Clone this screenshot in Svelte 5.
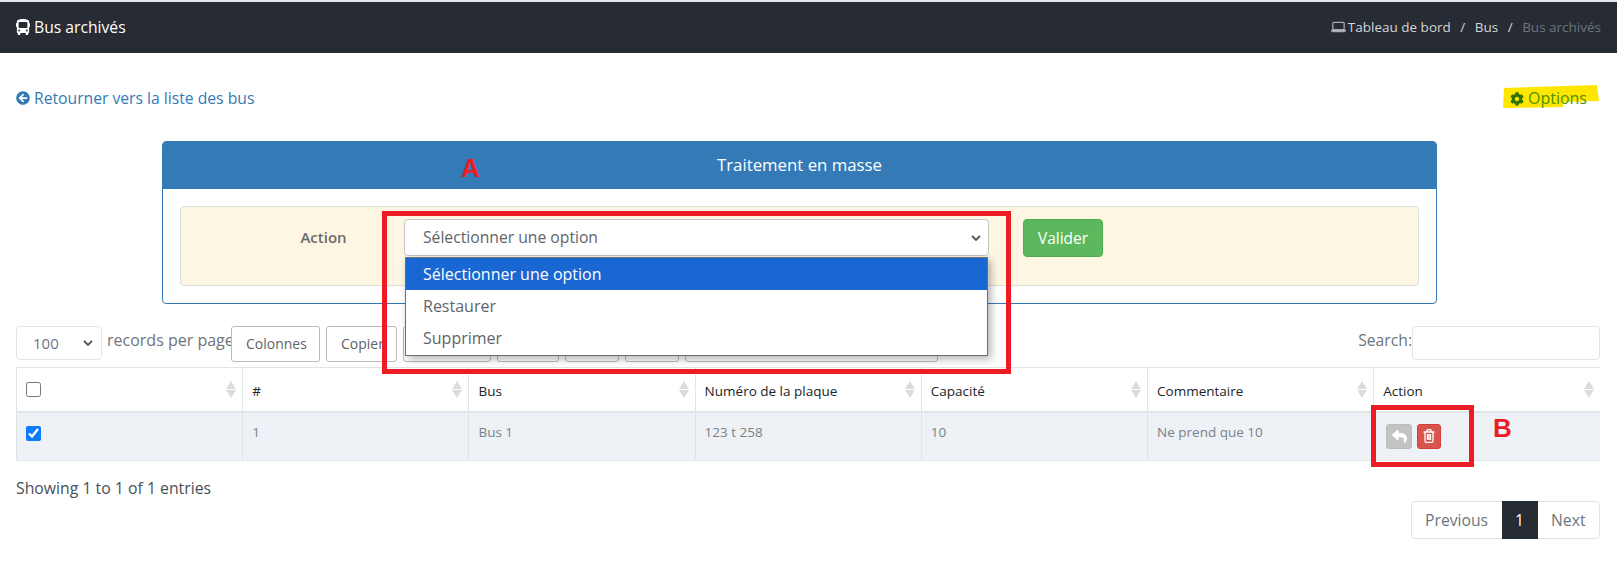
<script lang="ts">
  const columns = ["", "#", "Bus", "Numéro de la plaque", "Capacité", "Commentaire", "Action"];
  const row = ["1", "Bus 1", "123 t 258", "10", "Ne prend que 10"];
  const bulkOptions = ["Sélectionner une option", "Restaurer", "Supprimer"];
</script>

<div class="page">
  <header class="topbar">
    <div class="title">
      <svg class="ic bus" viewBox="0 0 512 512" preserveAspectRatio="none"><path fill="currentColor" d="M488 128h-8V80c0-44.8-99.2-80-224-80S32 35.2 32 80v48h-8c-13.25 0-24 10.74-24 24v80c0 13.25 10.75 24 24 24h8v160c0 17.67 14.33 32 32 32v32c0 17.67 14.33 32 32 32h32c17.67 0 32-14.33 32-32v-32h192v32c0 17.67 14.33 32 32 32h32c17.67 0 32-14.33 32-32v-32h6.4c16 0 25.6-12.8 25.6-25.6V256h8c13.25 0 24-10.75 24-24v-80c0-13.26-10.75-24-24-24zM112 400c-17.67 0-32-14.33-32-32s14.33-32 32-32 32 14.33 32 32-14.33 32-32 32zm16-112c-17.67 0-32-14.33-32-32V128c0-17.67 14.33-32 32-32h256c17.67 0 32 14.33 32 32v128c0 17.67-14.33 32-32 32H128zm272 112c-17.67 0-32-14.33-32-32s14.33-32 32-32 32 14.33 32 32-14.33 32-32 32z"/></svg>
      Bus archivés
    </div>
    <nav class="crumbs">
      <svg class="laptop" viewBox="0 0 16 12"><path fill="none" stroke="currentColor" d="M2.5 1h11a.5.5 0 0 1 .5.5V9H2V1.500a.5.5 0 0 1 .5-.5zM.5 9.500h15V10a1 1 0 0 1-1 1h-13a1 1 0 0 1-1-1z"/></svg>
      <span>Tableau de bord</span>
      <i>/</i>
      <span>Bus</span>
      <i>/</i>
      <span class="current">Bus archivés</span>
    </nav>
  </header>

  <main class="content">
    <div class="links">
      <a class="back" href="#back">
        <svg class="ic" viewBox="0 0 512 512"><path fill="currentColor" d="M256 504C119 504 8 393 8 256S119 8 256 8s248 111 248 248-111 248-248 248zm28.9-143.6L209.4 288H392c13.3 0 24-10.7 24-24v-16c0-13.3-10.7-24-24-24H209.4l75.5-72.4c9.7-9.3 9.900-24.800.4-34.300l-11-10.900c-9.400-9.400-24.600-9.400-33.900 0L107.700 239c-9.400 9.400-9.400 24.600 0 33.900l132.700 132.700c9.400 9.400 24.600 9.400 33.900 0l11-10.900c9.500-9.500 9.300-25-.4-34.300z"/></svg>
        Retourner vers la liste des bus
      </a>
      <a class="options" href="#options">
        <svg class="marker" viewBox="0 0 96 24" aria-hidden="true"><path fill="#ffe600" d="M1 3 L94 0 L96 16 L60 17 L60 22 L0 23 Z"/></svg>
        <svg class="ic" viewBox="0 0 512 512"><path fill="#2f7300" d="M487.400 315.700l-42.600-24.600c4.300-23.200 4.300-47 0-70.200l42.600-24.600c4.900-2.800 7.100-8.600 5.500-14-11.100-35.600-30-67.800-54.700-94.600-3.800-4.100-10-5.100-14.800-2.300L380.800 110c-17.900-15.400-38.500-27.300-60.800-35.100V25.800c0-5.600-3.900-10.500-9.400-11.700-36.700-8.200-74.300-7.800-109.200 0-5.500 1.200-9.400 6.100-9.400 11.700V75c-22.200 7.900-42.800 19.800-60.800 35.100L88.700 85.500c-4.900-2.800-11-1.900-14.800 2.300-24.700 26.700-43.600 58.900-54.700 94.600-1.700 5.400.6 11.200 5.500 14L67.300 221c-4.300 23.200-4.300 47 0 70.200l-42.600 24.600c-4.900 2.800-7.100 8.600-5.500 14 11.100 35.600 30 67.800 54.700 94.600 3.800 4.100 10 5.100 14.800 2.300l42.600-24.600c17.900 15.400 38.500 27.300 60.800 35.100v49.200c0 5.600 3.900 10.500 9.400 11.700 36.700 8.200 74.300 7.800 109.200 0 5.500-1.200 9.400-6.100 9.400-11.700v-49.200c22.200-7.900 42.800-19.800 60.800-35.100l42.600 24.600c4.900 2.800 11 1.900 14.800-2.300 24.700-26.700 43.600-58.900 54.700-94.600 1.500-5.500-.7-11.300-5.600-14.100zM256 336c-44.100 0-80-35.900-80-80s35.900-80 80-80 80 35.900 80 80-35.900 80-80 80z"/></svg>
        <span>Options</span>
      </a>
    </div>

    <section class="panel">
      <div class="panel-head">Traitement en masse</div>
      <div class="panel-body">
        <div class="well">
          <div class="action-label">Action</div>
          <div class="bulk">
            <select class="bulk-select">
              <option>{bulkOptions[0]}</option>
            </select>
            <ul class="dropdown">
              {#each bulkOptions as o, i}
                <li class:active={i === 0}>{o}</li>
              {/each}
            </ul>
          </div>
          <button class="valider">Valider</button>
        </div>
      </div>
    </section>

    <div class="toolbar">
      <select class="length"><option>100</option></select>
      <span class="per-page">records per page</span>
      <div class="buttons">
        <button class="tb">Colonnes</button>
        <button class="tb">Copier</button>
        <button class="tb w88" aria-hidden="true"></button>
        <button class="tb w62" aria-hidden="true"></button>
        <button class="tb w54" aria-hidden="true"></button>
        <button class="tb w54" aria-hidden="true"></button>
        <button class="tb w253" aria-hidden="true"></button>
      </div>
      <label class="search">Search:<input type="text" /></label>
    </div>

    <table>
      <thead>
        <tr>
          {#each columns as c, i}
            <th>
              <div class="th-inner">
                {#if i === 0}
                  <input class="check" type="checkbox" />
                {:else}
                  <span>{c}</span>
                {/if}
                <span class="sort"></span>
              </div>
            </th>
          {/each}
        </tr>
      </thead>
      <tbody>
        <tr>
          <td><input class="check checked" type="checkbox" checked /></td>
          {#each row as v}<td>{v}</td>{/each}
          <td>
            <div class="row-actions">
              <button class="act grey" aria-label="Restaurer">
                <svg viewBox="0 0 512 512"><path fill="currentColor" d="M8.309 189.836L184.313 37.851C199.719 24.546 224 35.347 224 56.015v80.053c160.629 1.839 288 34.032 288 186.258 0 61.441-39.581 122.309-83.333 154.132-13.653 9.931-33.111-2.533-28.077-18.631 45.344-145.012-21.507-183.510-176.590-185.742V360c0 20.700-24.300 31.453-39.687 18.164l-176.004-152c-11.071-9.562-11.086-26.753 0-36.328z"/></svg>
              </button>
              <button class="act red" aria-label="Supprimer">
                <svg viewBox="0 0 12 14"><path fill="none" stroke="currentColor" stroke-width="1.300" d="M.5 3h11M2 3v9a1.300 1.300 0 0 0 1.300 1.300h5.400A1.300 1.300 0 0 0 10 12V3M4 3V1.500a.8.8 0 0 1 .8-.8h2.400a.8.8 0 0 1 .8.8V3M4.500 5v6M6 5v6M7.500 5v6"/></svg>
              </button>
            </div>
          </td>
        </tr>
      </tbody>
    </table>

    <div class="info">Showing 1 to 1 of 1 entries</div>

    <div class="pager-row">
      <div class="pager">
        <a href="#prev">Previous</a>
        <a class="on" href="#p1">1</a>
        <a href="#next">Next</a>
      </div>
    </div>
  </main>

  <!-- annotations drawn on the screenshot -->
  <div class="note box-a"></div>
  <div class="note box-b"></div>
  <div class="note letter letter-a">A</div>
  <div class="note letter letter-b">B</div>
</div>

<style>
  :global(body) {
    margin: 0;
    background: #fff;
  }
  .page {
    position: relative;
    width: 1617px;
    height: 561px;
    overflow: hidden;
    border-top: 2px solid #e3e5e8;
    box-sizing: border-box;
    font-family: "Open Sans", sans-serif;
    font-size: 14px;
    line-height: 21px;
    color: #6c757d;
  }

  .topbar {
    height: 51px;
    background: #272b33;
    display: flex;
    align-items: center;
    justify-content: space-between;
    padding: 0 16px;
    color: #fff;
  }
  .title {
    display: flex;
    align-items: center;
    gap: 4px;
    font-size: 15.7px;
    margin-top: -1px;
  }
  .ic {
    width: 14px;
    height: 14px;
    flex: none;
  }
  .ic.bus {
    height: 16px;
  }
  .crumbs {
    display: flex;
    align-items: center;
    color: #d3d5d8;
    font-size: 13.5px;
    margin-top: -1px;
  }
  .laptop {
    width: 15px;
    height: 12px;
    margin-right: 2px;
  }
  .crumbs i {
    font-style: normal;
    margin: 0 9.5px;
  }
  .crumbs .current {
    color: #6c757d;
  }

  .content {
    padding: 0 17px 0 16px;
  }
  .links {
    display: flex;
    justify-content: space-between;
    align-items: center;
    height: 88px;
    padding-right: 13px;
    font-size: 15.7px;
  }
  .links a {
    display: flex;
    align-items: center;
    gap: 4px;
    text-decoration: none;
    color: #337ab7;
    padding-top: 2px;
  }
  .links .options {
    position: relative;
    color: #4a9400;
    padding-top: 3px;
    font-size: 16px;
  }
  .options > .ic,
  .options > span {
    position: relative;
  }
  .marker {
    position: absolute;
    left: -7px;
    top: 0;
    width: 96px;
    height: 24px;
  }

  .panel {
    width: 1275px;
    height: 163px;
    box-sizing: border-box;
    margin: 0 auto 0 146px;
    border: 1px solid #337ab7;
    border-radius: 4px;
  }
  .panel-head {
    height: 47px;
    background: #337ab7;
    border-radius: 3px 3px 0 0;
    color: #fff;
    font-size: 16.8px;
    line-height: 45px;
    text-align: center;
  }
  .panel-body {
    padding: 17px 17px;
  }
  .well {
    height: 80px;
    box-sizing: border-box;
    background: #fdf6e3;
    border: 1px solid #e0dfd8;
    border-radius: 4px;
    display: flex;
    align-items: flex-start;
    padding-top: 12px;
  }
  .action-label {
    width: 223px;
    box-sizing: border-box;
    padding-left: 62px;
    font-weight: 600;
    font-size: 15px;
    color: #6c6c6c;
    text-align: center;
    line-height: 36px;
  }
  .bulk {
    width: 585px;
    height: 37px;
  }
  .bulk-select {
    appearance: none;
    width: 100%;
    height: 37px;
    padding: 0 18px;
    font: inherit;
    font-size: 15.7px;
    color: #5f6468;
    background: #fff url("data:image/svg+xml,%3Csvg xmlns='http://www.w3.org/2000/svg' viewBox='0 0 10 6'%3E%3Cpath fill='none' stroke='%23555' stroke-width='1.800' d='M1 1l4 4 4-4'/%3E%3C/svg%3E") no-repeat right 7px center / 10px 6px;
    border: 1px solid #c4c6c8;
    border-radius: 4px;
  }
  .dropdown {
    position: absolute;
    left: 405px;
    top: 255px;
    width: 583px;
    height: 99px;
    box-sizing: border-box;
    margin: 0;
    padding: 0;
    list-style: none;
    background: #fff;
    border: 1px solid #6f6f6f;
    box-shadow: 3px 3px 8px rgba(0, 0, 0, 0.3);
    font-size: 16px;
    color: #5f6468;
    z-index: 2;
  }
  .dropdown li {
    height: 32px;
    line-height: 32px;
    padding-left: 17px;
  }
  .dropdown li.active {
    background: #1967d2;
    color: #fff;
  }
  .valider {
    margin-left: 34px;
    width: 80px;
    height: 38px;
    background: #5cb85c;
    border: 1px solid #4cae4c;
    border-radius: 4px;
    color: #fff;
    font: inherit;
    font-size: 15.5px;
    padding: 0;
  }

  .toolbar {
    display: flex;
    align-items: flex-start;
    margin-top: 22px;
    height: 41px;
  }
  .length {
    appearance: none;
    width: 86px;
    height: 34px;
    padding-left: 16px;
    font: inherit;
    font-size: 15px;
    color: #6c757d;
    background: #fff url("data:image/svg+xml,%3Csvg xmlns='http://www.w3.org/2000/svg' viewBox='0 0 10 6'%3E%3Cpath fill='none' stroke='%23555' stroke-width='1.800' d='M1 1l4 4 4-4'/%3E%3C/svg%3E") no-repeat right 8px center / 10px 6px;
    border: 1px solid #e2e5e8;
    border-radius: 4px;
  }
  .per-page {
    margin-left: 5px;
    font-size: 16px;
    line-height: 28px;
    white-space: nowrap;
    width: 124px;
  }
  .buttons {
    display: flex;
    gap: 6px;
  }
  .tb {
    height: 36px;
    padding: 0 14px 1px;
    background: #fff;
    border: 1px solid #bbb;
    border-radius: 3px;
    font: inherit;
    font-size: 14px;
    color: #5f6468;
  }
  .tb:nth-child(1) { width: 89px; }
  .tb:nth-child(2) { width: 71px; }
  .w88 { width: 88px; }
  .w62 { width: 62px; }
  .w54 { width: 54px; }
  .w253 { width: 253px; }
  .search {
    margin-left: auto;
    display: flex;
    font-size: 15.7px;
    line-height: 28px;
  }
  .search input {
    width: 188px;
    height: 34px;
    box-sizing: border-box;
    margin: 0;
    border: 1px solid #e2e5e8;
    border-radius: 4px;
    background: #fff;
  }

  table {
    width: 1584px;
    table-layout: fixed;
    border-collapse: collapse;
    border-top: 1px solid #e2e5e8;
  }
  th,
  td {
    border-left: 1px solid #e2e5e8;
    border-right: 1px solid #e2e5e8;
    text-align: left;
    vertical-align: top;
    box-sizing: border-box;
  }
  th:last-child,
  td:last-child {
    border-right: 0;
  }
  th {
    height: 44px;
    padding: 0 9px;
    border-bottom: 2px solid #e2e5e8;
    font-weight: 400;
    font-size: 13.5px;
    color: #212529;
  }
  .th-inner {
    display: flex;
    justify-content: space-between;
    align-items: flex-start;
    padding-top: 13px;
  }
  td {
    height: 49px;
    padding: 9px 9px 0;
    background: #eef1f5;
    border-bottom: 1px solid #e2e5e8;
    font-size: 13.5px;
    color: #7a8288;
  }
  .check {
    width: 15px;
    height: 15px;
    margin: 1px 0 0;
  }
  .checked {
    margin-top: 4px;
    accent-color: #0a7cff;
  }
  .sort {
    width: 0;
    height: 17px;
    margin-right: -3px;
    position: relative;
    flex: none;
    border-left: 5px solid transparent;
    border-right: 5px solid transparent;
  }
  .sort::before,
  .sort::after {
    content: "";
    position: absolute;
    left: -5px;
    border-left: 5px solid transparent;
    border-right: 5px solid transparent;
  }
  .sort::before {
    top: 0;
    border-bottom: 8px solid #dcdcdc;
  }
  .sort::after {
    top: 9px;
    border-top: 8px solid #dcdcdc;
  }
  .row-actions {
    display: flex;
    gap: 5px;
    margin: 2px 0 0 3px;
  }
  .act {
    height: 25px;
    padding: 0;
    border-radius: 3px;
    color: #fff;
    display: flex;
    align-items: center;
    justify-content: center;
  }
  .act.grey {
    width: 26px;
    background: #c3c3c3;
    border: 1px solid #bdbdbd;
  }
  .act.grey svg {
    width: 15px;
    height: 15px;
  }
  .act.red {
    width: 24px;
    background: #d9534f;
    border: 1px solid #d43f3a;
  }
  .act.red svg {
    width: 12px;
    height: 14px;
  }

  .info {
    margin-top: 15px;
    font-size: 15.8px;
    line-height: 24px;
    color: #495057;
  }
  .pager-row {
    display: flex;
    justify-content: flex-end;
    margin-top: 1px;
  }
  .pager {
    display: flex;
    height: 38px;
    box-sizing: border-box;
    border: 1px solid #e2e5e8;
    border-radius: 4px;
    font-size: 15.7px;
  }
  .pager a {
    padding: 0 13.5px;
    line-height: 36px;
    color: #6c757d;
    text-decoration: none;
  }
  .pager a.on {
    background: #272b33;
    color: #fff;
    margin: -1px 0;
    line-height: 38px;
  }

  .note {
    position: absolute;
    z-index: 3;
  }
  .box-a {
    left: 382px;
    top: 209px;
    width: 629px;
    height: 163px;
    box-sizing: border-box;
    border: 5px solid #ed1c24;
  }
  .box-b {
    left: 1371px;
    top: 403px;
    width: 103px;
    height: 62px;
    box-sizing: border-box;
    border: 5px solid #ed1c24;
  }
  .letter {
    font-family: "Liberation Sans", sans-serif;
    font-weight: 700;
    font-size: 26px;
    line-height: 26px;
    color: #ed1c24;
  }
  .letter-a {
    left: 461px;
    top: 153px;
  }
  .letter-b {
    left: 1493px;
    top: 413px;
  }
</style>
